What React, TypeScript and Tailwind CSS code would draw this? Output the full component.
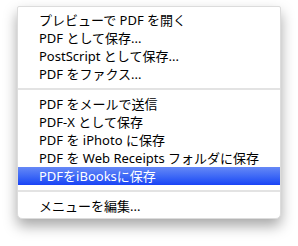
import React from 'react';

const groups: string[][] = [
  ['プレビューで PDF を開く', 'PDF として保存...', 'PostScript として保存...', 'PDF をファクス...'],
  [
    'PDF をメールで送信',
    'PDF-X として保存',
    'PDF を iPhoto に保存',
    'PDF を Web Receipts フォルダに保存',
    'PDFをiBooksに保存',
  ],
  ['メニューを編集...'],
];

const selected = 'PDFをiBooksに保存';

const MenuItem: React.FC<{ label: string }> = ({ label }) => {
  const active = label === selected;
  return (
    <div
      className={
        active
          ? 'h-[18px] flex items-center pl-[21px] text-white bg-gradient-to-b from-[#6688f6] to-[#1a42f5]'
          : 'h-[18px] flex items-center pl-[21px] text-black'
      }
    >
      {label}
    </div>
  );
};

export default function App() {
  return (
    <div
      className="w-[298px] h-[246px] bg-white pt-[6px] pl-[17px]"
      style={{ fontFamily: '"Noto Sans", "Noto Sans CJK JP", sans-serif' }}
    >
      <div className="w-[264px] h-[213px] bg-white rounded-t-[2px] rounded-b-[5px] border border-[#dcdcdc] shadow-[0_7px_14px_rgba(0,0,0,0.35)] pt-[4px] text-[13px] leading-none">
        {groups.map((items, gi) => (
          <div key={gi}>
            {gi > 0 && (
              <div className="h-[12px] flex items-center">
                <div className="w-full h-[2px] bg-[#e3e3e3]" />
              </div>
            )}
            {items.map(label => (
              <MenuItem key={label} label={label} />
            ))}
          </div>
        ))}
      </div>
    </div>
  );
}
